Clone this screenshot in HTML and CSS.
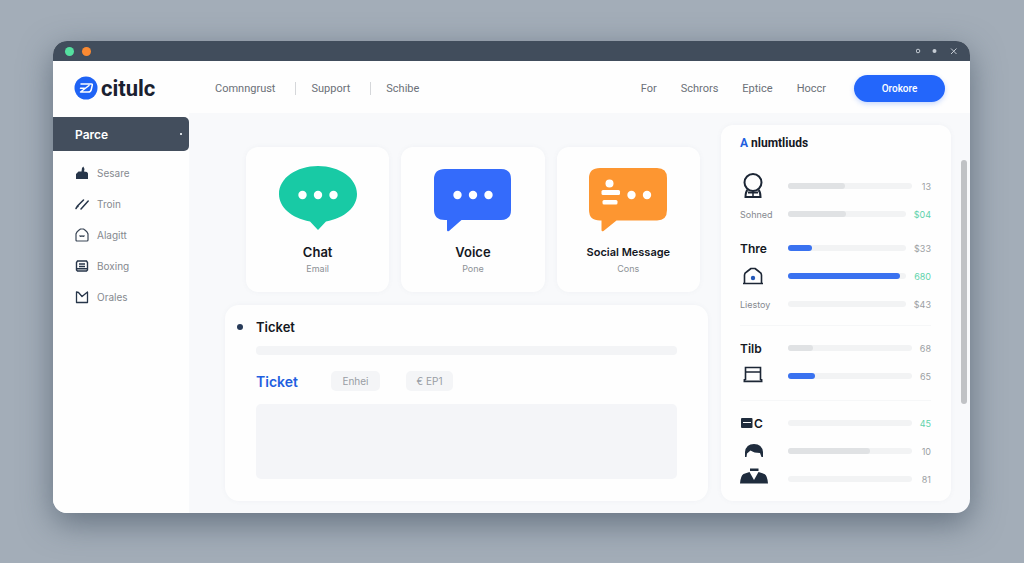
FILE: index.html
```
<!DOCTYPE html>
<html lang="en">
<head>
    <meta charset="UTF-8">
    <meta name="viewport" content="width=device-width, initial-scale=1.0">
    <title>citulc</title>
    <link rel="stylesheet" href="styles.css">
</head>
<body>
    <div class="window">
        <div class="titlebar">
            <span class="dot dot-green"></span>
            <span class="dot dot-orange"></span>
            <svg class="window-controls" width="42" height="10" viewBox="0 0 42 10" fill="none" stroke="#c5ccd4">
                <circle cx="2" cy="5" r="1.800"/>
                <circle cx="18.500" cy="5" r="2" fill="#c5ccd4" stroke="none"/>
                <path d="M35 2.500l5.500 5.500M40.500 2.500l-5.500 5.500"/>
            </svg>
        </div>

        <header class="header">
            <a class="logo" href="#">
                <svg width="24" height="24" viewBox="0 0 24 24" fill="none">
                    <circle cx="12" cy="12" r="11.500" fill="#1f63f5"/>
                    <path d="M7 8h10.500q1 0 .8 1l-1 4.500q-.5 2.500-3 2.500H6.500l8.500-6.500M6.500 12.300h4" stroke="#fff" stroke-width="1.500" stroke-linejoin="round" stroke-linecap="round"/>
                </svg>
                <span>citulc</span>
            </a>
            <nav class="nav nav-left">
                <a href="#">Comnngrust</a>
                <a href="#">Support</a>
                <a href="#">Schibe</a>
            </nav>
            <nav class="nav nav-right">
                <a href="#">For</a>
                <a href="#">Schrors</a>
                <a href="#">Eptice</a>
                <a href="#">Hoccr</a>
            </nav>
            <button type="button" class="cta">Orokore</button>
        </header>

        <div class="body">
            <aside class="sidebar">
                <button type="button" class="sidebar-head">Parce <span class="mark"></span></button>
                <nav class="side-nav">
                    <a href="#">
                        <svg width="14" height="14" viewBox="0 0 14 14"><path d="M1 13V8l2.500-2.500h3L7 2l1.300-1.500L9.500 3 9 5.500l3 .5 1 1.500V13z" fill="#27364a"/></svg>
                        Sesare
                    </a>
                    <a href="#">
                        <svg width="14" height="14" viewBox="0 0 14 14" fill="none" stroke="#27364a" stroke-width="1.500" stroke-linecap="round"><path d="M1 11.500l1.500-2.500L8.500 3M1.500 10.500l1.500-1M6 12l7.200-8"/></svg>
                        Troin
                    </a>
                    <a href="#">
                        <svg width="14" height="14" viewBox="0 0 14 14" fill="none" stroke="#3a4656" stroke-width="1.200" stroke-linejoin="round"><path d="M1 12V6Q1.500 4 3.500 2.500L5.500 1h3l2 1.500Q12.500 4 13 6v6q0 1-1 1H2q-1 0-1-1zM4.500 7.500l1.200 1 1.300-.6 1.300.6 1.200-1"/></svg>
                        Alagitt
                    </a>
                    <a href="#">
                        <svg width="14" height="14" viewBox="0 0 14 14" fill="none" stroke="#27364a" stroke-width="1.400"><path d="M2.500 2h9l1 1.500V11l-1 1h-9l-1-1V3.500zM4 5h6M4 7.500h6M1.500 9.800h11"/></svg>
                        Boxing
                    </a>
                    <a href="#">
                        <svg width="14" height="14" viewBox="0 0 14 14" fill="none" stroke="#27364a" stroke-width="1.300" stroke-linejoin="round"><path d="M1.500 2v10.500h11V2L7 6.500 3.500 2.500z"/></svg>
                        Orales
                    </a>
                </nav>
            </aside>

            <main class="content">
                <section class="channels">
                    <article class="channel">
                        <svg width="80" height="68" viewBox="0 0 80 68">
                            <path d="M40 1c21.500 0 39 12 39 28 0 13-12 24-31 27.500L40 65l-8-8.500C13 53 1 42 1 29 1 13 18.500 1 40 1z" fill="#18caa5"/>
                            <circle cx="24.500" cy="30" r="4.200" fill="#fff"/>
                            <circle cx="40" cy="30" r="4.200" fill="#fff"/>
                            <circle cx="55.500" cy="30" r="4.200" fill="#fff"/>
                        </svg>
                        <h2>Chat</h2>
                        <p>Email</p>
                    </article>
                    <article class="channel">
                        <svg width="80" height="68" viewBox="0 0 80 68">
                            <path d="M12 4h56q10 0 10 10v31q0 10-10 10H28.500L16 66q-2 1-2-1V55h-2Q1 55 1 45V14Q1 4 12 4z" fill="#346bfb"/>
                            <circle cx="24.500" cy="30" r="4.200" fill="#fff"/>
                            <circle cx="40" cy="30" r="4.200" fill="#fff"/>
                            <circle cx="55.500" cy="30" r="4.200" fill="#fff"/>
                        </svg>
                        <h2>Voice</h2>
                        <p>Pone</p>
                    </article>
                    <article class="channel">
                        <svg width="80" height="68" viewBox="0 0 80 68">
                            <path d="M12 3h57q10 0 10 10v32q0 10.500-10 10.500H28.500L15.500 66q-2 1-2-1v-9.500H12q-11 0-11-10.500V13Q1 3 12 3z" fill="#fd9631"/>
                            <circle cx="21.500" cy="18.500" r="4" fill="#fff"/>
                            <rect x="13.500" y="25" width="18.500" height="5" rx="1.500" fill="#fff"/>
                            <rect x="14.500" y="35" width="15" height="4.500" rx="1.500" fill="#fff"/>
                            <circle cx="43.500" cy="30" r="4.200" fill="#fff"/>
                            <circle cx="59" cy="30" r="4.200" fill="#fff"/>
                        </svg>
                        <h2 class="long">Social Message</h2>
                        <p>Cons</p>
                    </article>
                </section>

                <section class="ticket">
                    <h2>Ticket</h2>
                    <div class="line"></div>
                    <div class="ticket-tools">
                        <label for="ticketText">Ticket</label>
                        <button type="button">Enhei</button>
                        <button type="button" class="last">€ EP1</button>
                    </div>
                    <textarea id="ticketText"></textarea>
                </section>
            </main>

            <aside class="panel">
                <h2><span>A</span> nlumtliuds</h2>
                <div class="group">
                    <div class="row">
                        <div class="label icon">
                            <svg width="26" height="26" viewBox="0 0 26 26" fill="none" stroke="#1c2635" stroke-width="2"><circle cx="13" cy="9.500" r="8.500"/><path d="M7.500 17Q5.500 19 5.500 24h15q0-5-2-7M8 19.500h10" /><path d="M13 18.500V24" stroke-width="1.500"/></svg>
                        </div>
                        <div class="track"><div class="fill" style="width: 46%"></div></div>
                        <span class="value">13</span>
                    </div>
                    <div class="row">
                        <div class="label">Sohned</div>
                        <div class="track"><div class="fill" style="width: 49%"></div></div>
                        <span class="value green">$04</span>
                    </div>
                </div>
                <div class="group near">
                    <div class="row">
                        <h3 class="label">Thre</h3>
                        <div class="track"><div class="fill blue" style="width: 20%"></div></div>
                        <span class="value">$33</span>
                    </div>
                    <div class="row">
                        <div class="label icon">
                            <svg width="26" height="20" viewBox="0 0 26 20" fill="none" stroke="#1c2635" stroke-width="1.600" stroke-linejoin="round"><path d="M4.500 17V9q0-2 2-3L11 2.500h4L19.500 6q2 1 2 3v8M3 17.500h20"/><circle cx="13" cy="12" r="2.200" fill="#2458b8" stroke="none"/></svg>
                        </div>
                        <div class="track"><div class="fill blue" style="width: 95%"></div></div>
                        <span class="value green">680</span>
                    </div>
                    <div class="row">
                        <div class="label">Liestoy</div>
                        <div class="track"></div>
                        <span class="value">$43</span>
                    </div>
                </div>
                <div class="group ruled">
                    <div class="row">
                        <h3 class="label">Tilb</h3>
                        <div class="track"><div class="fill" style="width: 20%"></div></div>
                        <span class="value">68</span>
                    </div>
                    <div class="row">
                        <div class="label icon">
                            <svg width="26" height="20" viewBox="0 0 26 20" fill="none" stroke="#1c2635" stroke-width="1.600"><path d="M5.500 14V1.500h15V14M5.500 6h15"/><path d="M4.500 13v2.300h17V13M3.500 15.300h19" stroke-width="1.800"/></svg>
                        </div>
                        <div class="track"><div class="fill blue" style="width: 22%"></div></div>
                        <span class="value">65</span>
                    </div>
                </div>
                <div class="group ruled last-group">
                    <div class="row">
                        <h3 class="label">
                            <svg width="13" height="12" viewBox="0 0 13 12"><rect x="1" y="1" width="11.500" height="10" rx="1" fill="#1f2c3d"/><path d="M3 5.500h8" stroke="#fff"/></svg>
                            C
                        </h3>
                        <div class="track"></div>
                        <span class="value green">45</span>
                    </div>
                    <div class="row">
                        <div class="label icon">
                            <svg width="28" height="16" viewBox="0 0 28 16"><path d="M5 14V9q1-8 9-8t9 8v5h-1.500L20 10q-6 0-9.500-2.500L7 10.500 6.500 14z" fill="#1f2c3d"/></svg>
                        </div>
                        <div class="track"><div class="fill" style="width: 66%"></div></div>
                        <span class="value">10</span>
                    </div>
                    <div class="row">
                        <div class="label icon person">
                            <svg width="28" height="18" viewBox="0 0 28 18" fill="#1f2c3d"><path d="M10 1.500h8.500v2.500H10zM9.500 5L14 13l4.500-8 6 2q3 2 3.500 9.500H0Q.5 9 3.500 7z"/></svg>
                        </div>
                        <div class="track"></div>
                        <span class="value">81</span>
                    </div>
                </div>
            </aside>
            <div class="scrollbar"></div>
        </div>
    </div>
</body>
</html>
```
FILE: styles.css
```
* {
    margin: 0;
    padding: 0;
    box-sizing: border-box;
}

body {
    font-family: Inter, "Liberation Sans", sans-serif;
    font-size: 11px;
    color: #6b7078;
    background: #a3adb8;
    min-height: 100vh;
    display: flex;
    padding: 41px 54px 50px 53px;
}

a {
    color: inherit;
    text-decoration: none;
}

button,
textarea {
    font: inherit;
    border: none;
}

svg {
    flex: none;
}

h2,
h3 {
    font-size: 13px;
    font-weight: 600;
    color: #14181f;
}

.window {
    flex: 1;
    display: flex;
    flex-direction: column;
    background: #f8f9fb;
    border-radius: 14px;
    overflow: hidden;
    box-shadow: 0 10px 32px rgba(60, 75, 92, 0.6);
}

.titlebar {
    height: 20px;
    background: #414d5c;
    display: flex;
    align-items: center;
    gap: 8px;
    padding: 0 12px;
}

.dot {
    width: 9px;
    height: 9px;
    border-radius: 50%;
}

.dot-green {
    background: #55e0a0;
}

.dot-orange {
    background: #fb8a32;
}

.window-controls {
    margin-left: auto;
}

/* Header */
.header {
    height: 52px;
    background: #fefefe;
    display: flex;
    align-items: center;
    padding: 2px 25px 0 21px;
}

.logo {
    display: flex;
    align-items: center;
    gap: 3px;
    width: 141px;
    font-family: Roboto, "Liberation Sans", sans-serif;
    font-size: 22px;
    font-weight: 700;
    color: #1a2130;
}

.nav {
    display: flex;
    align-items: center;
    font-family: Roboto, "Liberation Sans", sans-serif;
}

.nav-left a + a {
    margin-left: 20px;
    padding-left: 15px;
    border-left: 1px solid #d5d7da;
}

.nav-right {
    margin-left: auto;
    gap: 24px;
}

.cta {
    width: 91px;
    height: 27px;
    margin-left: 28px;
    border-radius: 14px;
    background: #2366fb;
    color: white;
    font-family: Roboto, "Liberation Sans", sans-serif;
    font-size: 10px;
    font-weight: 500;
    box-shadow: 0 2px 5px rgba(35, 102, 251, 0.25);
    cursor: pointer;
}

/* Main area */
.body {
    flex: 1;
    display: flex;
}

.sidebar {
    width: 136px;
    background: #fefefe;
    padding-top: 4px;
}

.sidebar-head {
    width: 100%;
    height: 34px;
    display: flex;
    align-items: center;
    justify-content: space-between;
    padding: 0 7px 0 22px;
    background: #434e5d;
    color: white;
    font-size: 12px;
    font-weight: 600;
    border-radius: 0 5px 5px 0;
}

.mark {
    width: 2px;
    height: 2px;
    background: #d5dae0;
}

.side-nav {
    display: flex;
    flex-direction: column;
    gap: 15px;
    padding: 14px 22px;
    color: #85898f;
    font-size: 10px;
    line-height: 16px;
}

.side-nav a {
    display: flex;
    align-items: center;
    gap: 8px;
}

.content {
    flex: 1;
    display: flex;
    flex-direction: column;
    gap: 13px;
    padding: 34px 13px 12px 36px;
}

.channels {
    display: grid;
    grid-template-columns: repeat(3, 1fr);
    gap: 12px;
    padding: 0 8px 0 21px;
}

.channel,
.ticket,
.panel {
    background: #fefefe;
    border-radius: 12px;
    box-shadow: 0 0 5px rgba(100, 116, 139, 0.06);
}

.channel {
    height: 145px;
    padding-top: 18px;
    text-align: center;
}

.channel svg {
    display: block;
    margin: 0 auto 10px;
}

.channel h2 {
    line-height: 18px;
}

.channel .long {
    font-size: 11px;
}

.channel p {
    font-size: 9px;
    line-height: 16px;
    color: #8d9196;
}

.ticket {
    flex: 1;
    display: flex;
    flex-direction: column;
    padding: 13px 31px 22px;
    border-radius: 14px;
}

.ticket h2 {
    display: flex;
    align-items: center;
    line-height: 18px;
}

.ticket h2::before {
    content: "";
    width: 6px;
    height: 6px;
    margin: 0 13px 0 -19px;
    border-radius: 50%;
    background: #273a58;
}

.line {
    height: 9px;
    margin: 10px 0 16px;
    border-radius: 4px;
    background: #f3f4f6;
}

.ticket-tools {
    display: flex;
    align-items: center;
    margin-bottom: 13px;
}

.ticket-tools label {
    width: 75px;
    font-size: 14px;
    font-weight: 600;
    color: #1f5fe0;
}

.ticket-tools button {
    width: 49px;
    height: 20px;
    margin-right: 26px;
    border-radius: 5px;
    background: #f4f5f7;
    color: #989da4;
    font-size: 10px;
}

.ticket-tools .last {
    width: 47px;
    margin-right: 0;
}

.ticket textarea {
    flex: 1;
    min-height: 74px;
    border-radius: 5px;
    background: #f4f5f8;
    resize: none;
}

/* Stats panel */
.panel {
    width: 230px;
    margin: 12px 0;
    padding: 9px 20px 8px 19px;
}

.panel h2 {
    font-family: Roboto, "Liberation Sans", sans-serif;
    font-size: 12px;
    font-weight: 700;
    line-height: 18px;
    margin-bottom: 20px;
}

.panel h2 span {
    color: #1f5fe0;
}

.near {
    margin-top: 6px;
}

.ruled {
    margin-top: 7px;
    padding-top: 8px;
    border-top: 1px solid #f6f7f8;
}

.last-group {
    margin-top: 10px;
}

.row {
    height: 28px;
    display: flex;
    align-items: center;
}

.label {
    width: 48px;
    display: flex;
    align-items: center;
    font-size: 9px;
    color: #85898f;
}

h3.label {
    gap: 1px;
    font-size: 12px;
    color: #14181f;
}

.person svg {
    margin-top: -6px;
}

.track {
    flex: 1;
    height: 6px;
    border-radius: 3px;
    background: #f2f3f4;
}

.fill {
    height: 100%;
    border-radius: 3px;
    background: #e0e2e4;
}

.blue {
    background: #3a72f0;
}

.value {
    min-width: 11px;
    margin-left: 8px;
    font-size: 9px;
    text-align: right;
    color: #9b9ea3;
}

.green {
    color: #5fd3ac;
}

.scrollbar {
    width: 6px;
    height: 244px;
    margin: 47px 3px 0 10px;
    border-radius: 3px;
    background: #c0c2c5;
}
```
